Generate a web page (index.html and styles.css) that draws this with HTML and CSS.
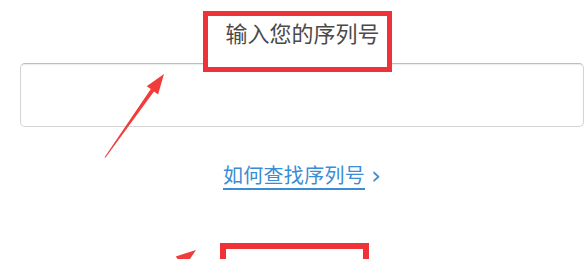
FILE: index.html
```html
<!DOCTYPE html>
<html lang="zh-CN">
<head>
	<meta charset="UTF-8">
	<meta name="viewport" content="width=device-width">
	<title>输入您的序列号</title>
	<link rel="stylesheet" href="styles.css">
</head>
<body>
<main class="serial-form">

	<div class="label-row">
		<label class="serial-label mark" for="serial">输入您的序列号</label>
	</div>

	<input class="serial-input" id="serial" type="text">

	<p class="help-row">
		<a class="help-link" href="#">如何查找序列号</a><span class="chevron">›</span>
	</p>

	<div class="submit-row">
		<div class="submit-box mark"></div>
	</div>

</main>

<!-- annotation arrows drawn over the page -->
<svg class="arrows" width="587" height="259" viewBox="0 0 587 259">
	<polygon points="104.6,157.3 105.4,157.7 154.0,91.5 158.1,94.4 164,74 146.7,86.2 150.8,89.1"/>
	<polygon points="150,290 152,292 182,263 184.2,267.6 196,250 175.8,256.4 179,261"/>
</svg>
</body>
</html>
```

FILE: styles.css
```css
body {
	margin: 0;
	overflow: hidden;
	background: #fff;
	font-family: "Noto Sans CJK SC", "Noto Sans", sans-serif;
}

.serial-form {
	padding: 11px 3px 0 20px;
}

/* red annotation frame */
.mark {
	border: 5px solid #ee3237;
	background: #fff;
}

.label-row {
	text-align: center;
	margin-bottom: -9px;
}

.serial-label {
	display: inline-block;
	position: relative;
	z-index: 1;
	margin-right: 9px;
	padding: 3px 7px 22px 17px;
	font-size: 22px;
	line-height: 26px;
	color: #4a4a4a;
}

.serial-input {
	display: block;
	box-sizing: border-box;
	width: 100%;
	height: 64px;
	margin: 0;
	border: 1px solid #d4d4d4;
	border-top-color: #bdbdbd;
	border-radius: 5px;
	box-shadow: inset 0 1px 1px rgba(0, 0, 0, 0.08);
	background: #fff;
}

.help-row {
	margin: 36px 0 0;
	text-align: center;
	font-size: 20px;
	line-height: 24px;
}

.help-link {
	color: #3a8dd4;
	letter-spacing: 0.3px;
	text-decoration: underline;
	text-decoration-thickness: 1.5px;
	text-underline-offset: 5px;
}

.chevron {
	margin-left: 6px;
	color: #3a8dd4;
	font-family: "DejaVu Sans", sans-serif;
	font-size: 25px;
	line-height: 20px;
	vertical-align: -1px;
}

.submit-row {
	height: 48px;
	margin-top: 56px;
	overflow: hidden;
	text-align: center;
}

.submit-box {
	display: inline-block;
	box-sizing: border-box;
	width: 149px;
	height: 60px;
	margin-right: 15px;
	border-width: 6px;
}

.arrows {
	position: absolute;
	top: 0;
	left: 0;
	pointer-events: none;
	fill: #f23c3c;
}
```
